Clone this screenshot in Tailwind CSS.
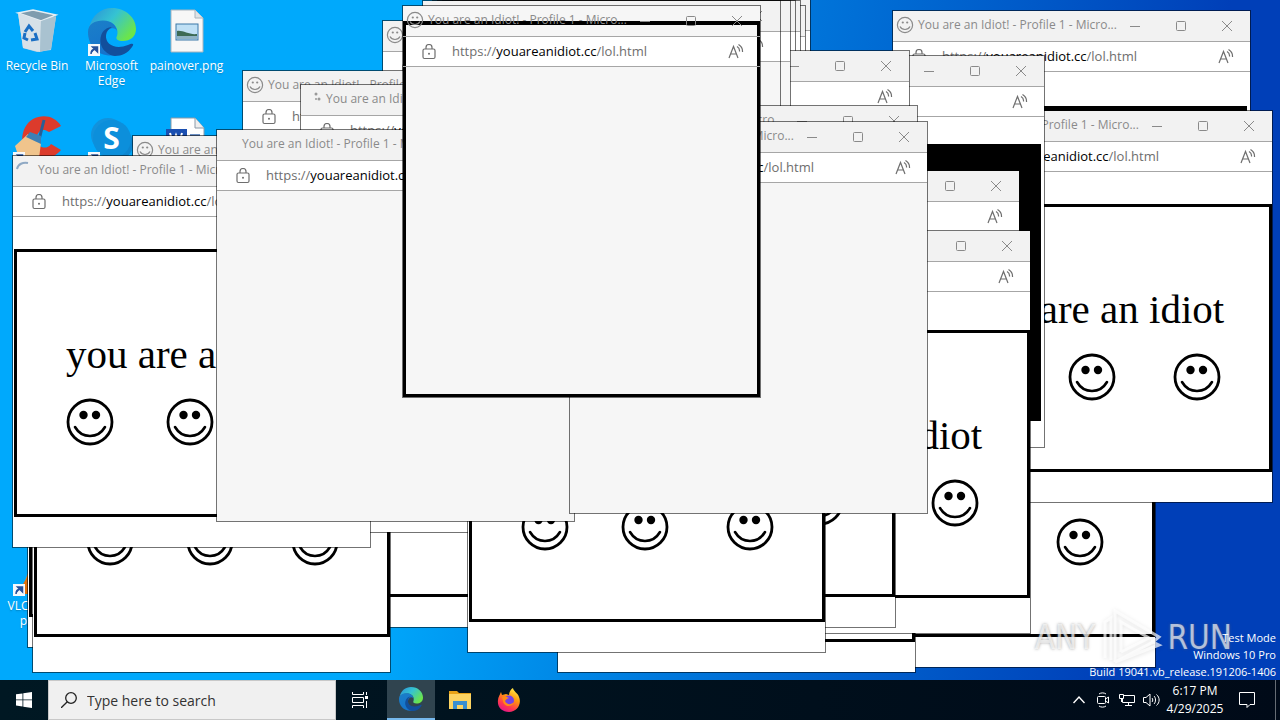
<!DOCTYPE html>
<html lang="en">
<head>
    <meta charset="UTF-8">
    <meta name="viewport" content="width=device-width, initial-scale=1.0">
    <title>Desktop</title>
    <script src="https://cdn.jsdelivr.net/npm/@tailwindcss/browser@4"></script>
</head>
<body class="h-screen flex flex-col overflow-hidden font-['Open_Sans','Noto_Sans',sans-serif] text-white">
    <!-- Shared icons -->
    <svg class="absolute size-0">
        <symbol id="smiley" viewBox="0 0 48 48">
            <circle cx="24" cy="24" r="22" fill="none" stroke="currentColor" stroke-width="2.8"/>
            <circle cx="17.5" cy="17" r="4.2" fill="currentColor"/>
            <circle cx="30" cy="17" r="4.2" fill="currentColor"/>
            <path d="M9 29C16 41 32 41 39 29" fill="none" stroke="currentColor" stroke-width="2.6" stroke-linecap="round"/>
        </symbol>
        <symbol id="favicon" viewBox="0 0 18 18">
            <circle cx="9" cy="9" r="7.6" fill="none" stroke="currentColor" stroke-width="1.2"/>
            <circle cx="6.800" cy="6.500" r="1.100" fill="currentColor"/>
            <circle cx="11.200" cy="6.500" r="1.100" fill="currentColor"/>
            <path d="M4 10.500C6 14.500 12 14.500 14 10.500" fill="none" stroke="currentColor" stroke-width="1.200"/>
        </symbol>
        <symbol id="lock" viewBox="0 0 14 16">
            <rect x="1" y="5" width="12" height="9.500" rx="1.500" fill="none" stroke="currentColor" stroke-width="1.200"/>
            <path d="M4 5V3.500a3 3 0 0 1 6 0V5" fill="none" stroke="currentColor" stroke-width="1.200"/>
            <circle cx="7" cy="9.800" r="1" fill="currentColor"/>
        </symbol>
        <symbol id="read-aloud" viewBox="0 0 16 16">
            <path d="M1 14L5.500 2.500L10 14M2.500 10h6M9 2.500a5 5 0 0 1 2.500 5M10.500 0.500a8 8 0 0 1 4 7.500" fill="none" stroke="currentColor" stroke-width="1.200"/>
        </symbol>
        <symbol id="shortcut" viewBox="0 0 12 12">
            <rect width="12" height="12" fill="#f5f8fb"/>
            <path d="M3 10C3 7 4 5.500 6.500 5.500M4.500 3H9.500V8z" fill="#24509c" stroke="#24509c" stroke-width="1.500"/>
        </symbol>
        <symbol id="edge" viewBox="0 0 48 48">
            <path d="M1 20C4 7 13 0 24 0C38 0 48 10 48 21C48 29 42 33 35 33C30 33 27 31 29 28C31 22 28 14 17 13C9 13 3 16 1 20z" fill="url(#edge-top)"/>
            <path d="M0 24C0 16 7 12.500 15 12.500C24 12.500 29 18 29 24C29 19 19 18 18 28C17 38 26 46 33 46C13 52 0 40 0 24z" fill="url(#edge-low)"/>
            <path d="M18 27C17 37 28 42 40 37C44 35 47 35 44 39C40 45 34 48 27 48C18 47 10 38 13 28C14 23 19 19 24 19C20 21 18 24 18 27z" fill="#124f9c"/>
        </symbol>
        <defs>
            <linearGradient id="edge-top" x1="0" y1="0" x2="1" y2="0.600">
                <stop offset="0" stop-color="#2a8fd8"/>
                <stop offset="0.500" stop-color="#35c3d2"/>
                <stop offset="1" stop-color="#6be54a"/>
            </linearGradient>
            <linearGradient id="edge-low" x1="0" y1="0" x2="0.400" y2="1">
                <stop offset="0" stop-color="#1b7fc8"/>
                <stop offset="1" stop-color="#1573cc"/>
            </linearGradient>
        </defs>
    </svg>

    <main class="relative flex-1 overflow-hidden bg-linear-100 from-[#00a9fc] from-34% via-[#0078dc] via-56% to-[#003fb8] to-88%">
        <!-- Desktop icons -->
        <ul class="grid grid-cols-[74px_75px_75px] auto-rows-[108px] text-xs leading-[15px] text-center pt-2">
            <li>
                <a href="#" class="flex flex-col items-center gap-0.5">
                    <svg class="size-12" viewBox="0 0 48 48">
                        <path d="M5 5L43 9L38 42L24 44L10 40z" fill="#b9cfdd"/>
                        <path d="M5 5L20 2L43 7L28 13z" fill="#7f9cae" stroke="#e6eef3" stroke-width="1.500"/>
                        <path d="M5 5L28 13L27 44L10 40z" fill="#d7e1e8"/>
                        <path d="M28 13L43 8L38 41L27 44z" fill="#a9c2d0"/>
                        <path d="M12 24l4-6 4 5M22 25l2 6-6 1M15 32l-4-2 1-5" fill="none" stroke="#1b6fc4" stroke-width="3"/>
                    </svg>
                    <span class="text-shadow-sm">Recycle Bin</span>
                </a>
            </li>
            <li>
                <a href="#" class="flex flex-col items-center gap-0.5">
                    <span class="relative">
                        <svg class="size-12"><use href="#edge"/></svg>
                        <svg class="absolute left-0 bottom-0 size-3"><use href="#shortcut"/></svg>
                    </span>
                    <span class="text-shadow-sm">Microsoft<br>Edge</span>
                </a>
            </li>
            <li>
                <a href="#" class="flex flex-col items-center gap-0.5">
                    <svg class="size-12" viewBox="0 0 48 48">
                        <path d="M8 2H32L40 10V44H8z" fill="#f7f7f7" stroke="#a8b4bd"/>
                        <path d="M32 2V10H40" fill="#dfe3e6" stroke="#a8b4bd"/>
                        <rect x="13" y="16" width="22" height="16" fill="#bfe0f5" stroke="#3d79a8"/>
                        <path d="M14 23C20 22 26 27 34 26V29H14z" fill="#3d6b55"/>
                        <path d="M14 28H34V31H14z" fill="#8fb3c4"/>
                    </svg>
                    <span class="text-shadow-sm">painover.png</span>
                </a>
            </li>
            <li>
                <a href="#" class="flex flex-col items-center" aria-label="CCleaner">
                    <span class="relative">
                        <svg class="size-12" viewBox="0 0 48 48">
                            <path d="M48 10C42 0 30-2 20 3C8 10 6 28 14 38C24 46 40 44 48 34L38 28C34 34 26 32 24 26C22 18 28 10 36 16z" fill="#dc3b2c"/>
                            <path d="M31 4L26 24" stroke="#285f96" stroke-width="3"/>
                            <path d="M15 18L28 27L26 42H6L2 30z" fill="#f0c48c"/>
                            <path d="M17 16L28 20L28 28L13 21z" fill="#3d80b5"/>
                        </svg>
                        <svg class="absolute left-0 bottom-0 size-3"><use href="#shortcut"/></svg>
                    </span>
                </a>
            </li>
            <li>
                <a href="#" class="flex flex-col items-center" aria-label="Skype">
                    <span class="relative grid place-items-center size-12">
                        <svg class="absolute inset-0 size-12" viewBox="0 0 48 48">
                            <circle cx="20" cy="19" r="17" fill="#1292dc"/>
                            <circle cx="28" cy="28" r="17" fill="#0d86d0"/>
                            <circle cx="24" cy="23" r="19" fill="#0c8fdb"/>
                        </svg>
                        <b class="relative text-3xl leading-10 pb-1">S</b>
                        <svg class="absolute left-0 bottom-0 size-3"><use href="#shortcut"/></svg>
                    </span>
                </a>
            </li>
            <li>
                <a href="#" class="flex flex-col items-center" aria-label="Document">
                    <svg class="size-12" viewBox="0 0 48 48">
                        <path d="M8 2H32L41 12V44H8z" fill="#fff" stroke="#8a99a8"/>
                        <path d="M32 2V12H41" fill="#eee" stroke="#8a99a8"/>
                        <path d="M3 13H24V32H3z" fill="#1b4fb0"/>
                        <path d="M7 17l3 10 3-8 3 8 3-10" fill="none" stroke="#fff" stroke-width="2"/>
                        <path d="M27 19H37M27 23H37" stroke="#6b8fc4" stroke-width="2"/>
                    </svg>
                </a>
            </li>
        </ul>
        <a href="#" class="absolute left-0 top-[548px] w-[74px] flex flex-col items-center gap-0.5 text-xs leading-[15px] text-center">
            <span class="relative">
                <svg class="size-12" viewBox="0 0 48 48">
                    <path d="M24 2L38 38H10z" fill="#f28a1c"/>
                    <path d="M15 28H38L44 46H4z" fill="#e0700c"/>
                </svg>
                <svg class="absolute left-0 bottom-0 size-3"><use href="#shortcut"/></svg>
            </span>
            <span class="text-shadow-sm">VLC media<br>player</span>
        </a>

        <!-- Browser windows, filled in by the script -->
        <div id="windows" class="text-black"></div>

        <!-- Watermark -->
        <div class="absolute right-12 top-[608px] flex items-center gap-1 font-['DejaVu_Sans_Condensed','DejaVu_Sans',sans-serif] text-[33px] leading-[60px] text-white/65 text-shadow-[0_0_3px_rgb(100_100_100/0.6)]">
            <span>ANY</span>
            <svg class="w-16 h-15 drop-shadow-sm" viewBox="0 0 64 60" fill="none" stroke="#fff" stroke-opacity="0.700" stroke-width="3">
                <path d="M6 50V14L12 10V52M16 54V3L60 29L54 34L16 54L60 37L52 33M22 44V14L50 30L22 44"/>
            </svg>
            <span>RUN</span>
        </div>
        <p class="absolute right-1 bottom-0 text-[11px] leading-[17px] text-right">Test Mode<br>Windows 10 Pro<br>Build 19041.vb_release.191206-1406</p>
    </main>

    <!-- Taskbar -->
    <footer class="h-10 shrink-0 flex items-stretch bg-linear-to-r from-[#001823] to-[#000a18]">
        <button class="w-12 grid place-items-center" aria-label="Start">
            <svg class="size-4" viewBox="0 0 16 16" fill="#fff"><path d="M0 2.300L6.500 1.400V7.500H0zM7.300 1.300L16 0V7.500H7.300zM0 8.300H6.500V14.500L0 13.600zM7.300 8.300H16V16L7.300 14.700z"/></svg>
        </button>
        <label class="w-72 flex items-center gap-2.5 px-3 bg-[#f0f0f0] border border-[#c8c8c8] text-[#333]">
            <svg class="size-4" viewBox="0 0 16 16" fill="none" stroke="#222" stroke-width="1.300"><circle cx="10" cy="6" r="5.300"/><path d="M6.300 9.700L0 16"/></svg>
            <input type="text" placeholder="Type here to search" aria-label="Search" class="flex-1 min-w-0 text-[14px] outline-none placeholder:text-[#333]">
        </label>
        <button class="w-[51px] grid place-items-center pr-1" aria-label="Task View">
            <svg class="size-4" viewBox="0 0 16 16" fill="none" stroke="#fff"><path d="M0.500 0V2.500H11.500V0M0.500 16V13.500H11.500V16M0.500 5.500H11.500V10.500H0.500zM14.500 0V3M14.500 9V16"/><path d="M13 4h3v3h-3z" fill="#fff" stroke="none"/></svg>
        </button>
        <button class="w-12 grid place-items-center bg-[#30444f] border-b-2 border-[#76b9ed]" aria-label="Microsoft Edge">
            <svg class="size-6"><use href="#edge"/></svg>
        </button>
        <button class="w-[49px] grid place-items-center" aria-label="File Explorer">
            <svg class="w-[22px] h-5" viewBox="0 0 22 20">
                <path d="M0 1H8L10 3H22V19H0z" fill="#e8a317"/>
                <path d="M0 4H22V19H0z" fill="#fcd462"/>
                <path d="M4 11H18V19H14V15H8V19H4z" fill="#3a8fd0"/>
            </svg>
        </button>
        <button class="w-[49px] grid place-items-center" aria-label="Firefox">
            <svg class="size-6" viewBox="0 0 24 24">
                <defs><linearGradient id="fox" x1="0.800" y1="0" x2="0.300" y2="1"><stop offset="0" stop-color="#fff44f"/><stop offset="0.400" stop-color="#ff980e"/><stop offset="0.750" stop-color="#ff3750"/><stop offset="1" stop-color="#e3158a"/></linearGradient></defs>
                <path d="M4 4L5 7L9 6L12 7C12 4 14 1 16 0C16 3 21 5 22 9C25 16 20 24 12 24C5 24 0 19 1 12C1 9 3 7 4 4z" fill="url(#fox)"/>
                <circle cx="12" cy="12.500" r="5" fill="#7542e5"/>
                <path d="M5 9C8 8 10 9 12 10C9 11 9 12 8 13C10 17 14 17 17 14C16 19 7 20 6 13z" fill="#ff8a16"/>
            </svg>
        </button>
        <div class="ml-auto flex items-stretch">
            <button class="w-6 grid place-items-center" aria-label="Show hidden icons">
                <svg class="size-3" viewBox="0 0 12 12" fill="none" stroke="#fff" stroke-width="1.400"><path d="M0.500 9L6 3L11.500 9"/></svg>
            </button>
            <button class="w-6 grid place-items-center" aria-label="Meet Now">
                <svg class="w-3 h-4" viewBox="0 0 12 16" fill="none" stroke="#fff"><rect x="0.500" y="4.500" width="8" height="7" rx="1"/><path d="M8.500 7L11.500 5V11L8.500 9M2 2C4 0.500 7 0.500 9 2M2 14C4 15.500 7 15.500 9 14"/></svg>
            </button>
            <button class="w-6 grid place-items-center" aria-label="Network">
                <svg class="size-4" viewBox="0 0 16 16" fill="none" stroke="#fff"><path d="M5 3.500H15.500V10.500H3.500V7M9.500 10.500V13.500M6 13.500H13M0.500 2.500H4.500V6.500H0.500zM2.500 6.500V10"/></svg>
            </button>
            <button class="w-6 grid place-items-center" aria-label="Volume">
                <svg class="w-[17px] h-4" viewBox="0 0 17 16" fill="none" stroke="#fff"><path d="M0.500 5.500H3L7 2V14L3 10.500H0.500zM9 6C10 7 10 9 9 10M11 4C13 6 13 10 11 12M13.500 2.500C17 5.500 17 10.500 13.500 13.500"/></svg>
            </button>
            <button class="w-16 text-xs leading-[18px] text-center">6:17 PM<br>4/29/2025</button>
            <button class="w-10 grid place-items-center" aria-label="Notifications">
                <svg class="w-4 h-4" viewBox="0 0 16 16" fill="none" stroke="#fff"><path d="M0.500 0.500H15.500V12.500H11L8 15.500V12.500H0.500z"/></svg>
            </button>
            <div class="w-[13px] flex justify-end pr-1"><span class="border-r border-white/40"></span></div>
        </div>
    </footer>

    <script>
        // Bottom of the stack first. body: page (white page with faces), blank, dark
        // title / url / text switch on the texts of a window that is not buried
        const windowList = [
            { x: 797, y: 275, body: 'page' },
            { x: 557, y: 280, body: 'page' },
            { x: 892, y: 10, body: 'dark', gap: 34, bottom: 27, title: true, url: true },
            { x: 914, y: 110, body: 'page', title: true, url: true, text: true },
            { x: 686, y: 55, body: 'dark', gap: 27, bottom: 26 },
            { x: 452, y: -1, body: 'blank' },
            { x: 447, y: 5, body: 'blank' },
            { x: 442, y: 0, body: 'blank' },
            { x: 437, y: 0, body: 'blank' },
            { x: 551, y: 50, body: 'blank' },
            { x: 432, y: 0, body: 'blank' },
            { x: 422, y: 0, body: 'blank' },
            { x: 661, y: 170, body: 'blank' },
            { x: 672, y: 230, body: 'page', gap: 38, height: 404, text: true },
            { x: 537, y: 235, body: 'page' },
            { x: 559, y: 105, body: 'blank', title: true },
            { x: 27, y: 255, body: 'page' },
            { x: 150, y: 235, body: 'page' },
            { x: 32, y: 275, body: 'page', height: 398 },
            { x: 382, y: 20, body: 'blank' },
            { x: 242, y: 70, body: 'blank', title: true, url: true },
            { x: 300, y: 84, body: 'blank', icon: 'dots', title: true, url: true },
            { x: 132, y: 135, body: 'page', height: 398, title: true },
            { x: 467, y: 260, body: 'page' },
            { x: 12, y: 155, body: 'page', icon: 'arc', title: true, url: true, text: true },
            { x: 216, y: 129, body: 'blank', icon: 'none', title: true, url: true },
            { x: 569, y: 121, body: 'blank', title: true, url: true },
            { x: 402, y: 5, body: 'blank', framed: true, title: true, url: true }
        ];

        const icons = {
            face: '<svg class="size-[18px] shrink-0"><use href="#favicon"/></svg>',
            dots: '<svg class="size-[18px] shrink-0" viewBox="0 0 18 18" fill="#999"><circle cx="12" cy="4" r="1.500"/><circle cx="15" cy="9" r="1.500"/><circle cx="12" cy="9" r="1"/></svg>',
            arc: '<svg class="size-[18px] shrink-0" viewBox="0 0 18 18" fill="none" stroke="#8fa9c4" stroke-width="2"><path d="M1 8C2 3 7 1 12 2"/></svg>',
            none: '<span class="size-[18px] shrink-0"></span>'
        };

        function bodyHtml(win) {
            if (win.body === 'page') {
                return `
                    <div class="flex-1 bg-white" style="padding-top:${win.gap || 32}px">
                        <div class="h-[268px] ml-px border-3 border-black pl-[49px] pt-[78px]">
                            <p class="h-12 font-['Liberation_Serif',serif] text-[41px] leading-[48px] whitespace-nowrap">${win.text ? 'you are an idiot' : ''}</p>
                            <div class="flex pt-5">
                                <svg class="size-12 shrink-0 mr-[52px]"><use href="#smiley"/></svg>
                                <svg class="size-12 shrink-0 mr-[57px]"><use href="#smiley"/></svg>
                                <svg class="size-12 shrink-0"><use href="#smiley"/></svg>
                            </div>
                        </div>
                    </div>`;
            }
            if (win.body === 'dark') {
                return `
                    <div class="flex-1 flex bg-white" style="padding-top:${win.gap}px;padding-bottom:${win.bottom}px">
                        <div class="flex-1 mr-[3px] bg-black"></div>
                    </div>`;
            }
            return `<div class="flex-1 ${win.framed ? '' : 'bg-[#f6f6f6]'}"></div>`;
        }

        function windowHtml(win) {
            const bg = win.framed ? 'bg-[#f6f6f6]' : 'bg-white';
            return `
                <section class="absolute w-[359px] flex flex-col border border-black/55 bg-clip-padding ${bg}" style="left:${win.x}px;top:${win.y}px;height:${win.height || 393}px">
                    ${win.framed ? '<div class="absolute inset-x-0 top-[15px] bottom-0 border-3 border-t-4 border-black"></div>' : ''}
                    <header class="relative h-[31px] shrink-0 flex items-stretch border-b border-[#a6a6a6] text-[#8a8a8a] ${win.framed ? '' : 'bg-[#f2f2f2]'}">
                        <div class="flex-1 min-w-0 flex items-center gap-1 pl-[3px] pb-0.5">
                            ${icons[win.icon || 'face']}
                            ${win.title ? '<h2 class="text-xs whitespace-nowrap">You are an Idiot! - Profile 1 - Micro...</h2>' : ''}
                        </div>
                        <button class="w-[46px] grid place-items-center" aria-label="Minimize"><svg class="size-3" viewBox="0 0 12 12" stroke="currentColor"><path d="M1 6.500H11"/></svg></button>
                        <button class="w-[46px] grid place-items-center" aria-label="Maximize"><svg class="size-3" viewBox="0 0 12 12" fill="none" stroke="currentColor"><rect x="1.500" y="1.500" width="9" height="9" rx="1"/></svg></button>
                        <button class="w-[46px] grid place-items-center" aria-label="Close"><svg class="size-3" viewBox="0 0 12 12" stroke="currentColor"><path d="M1 1L11 11M11 1L1 11"/></svg></button>
                    </header>
                    <div class="relative h-[30px] shrink-0 flex border-b border-[#a6a6a6] text-[#6e6e6e]">
                        <div class="flex-1 flex items-center mx-[3px] pl-4 pr-[13px] bg-white">
                            <svg class="w-3.5 h-4 mr-4"><use href="#lock"/></svg>
                            ${win.url ? '<span class="text-[13px] whitespace-nowrap">https://<span class="text-black">youareanidiot.cc</span>/lol.html</span>' : ''}
                            <button class="ml-auto" aria-label="Read aloud"><svg class="size-4"><use href="#read-aloud"/></svg></button>
                        </div>
                    </div>
                    ${bodyHtml(win)}
                </section>`;
        }

        document.getElementById('windows').innerHTML = windowList.map(windowHtml).join('');
    </script>
</body>
</html>
